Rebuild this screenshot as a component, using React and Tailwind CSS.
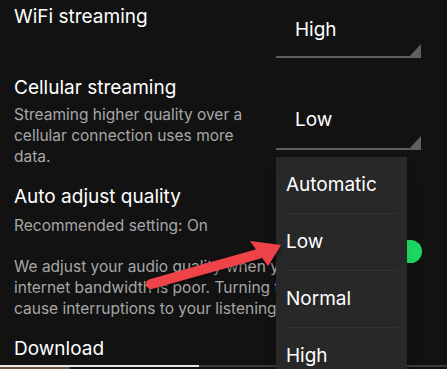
import React from "react";

function Select({ value, className }) {
  return (
    <div className={`relative w-[145px] ${className}`}>
      <div className="pl-[19px] text-[19px] leading-[24px] text-white">{value}</div>
      <div className="absolute right-0 bottom-0 h-[2px] w-full bg-[#5f5f5f]" />
      <svg className="absolute right-0 bottom-0" width="13" height="14" viewBox="0 0 13 14">
        <path d="M13 0 L13 14 L0 14 Z" fill="#5f5f5f" />
      </svg>
    </div>
  );
}

export default function App() {
  const options = ["Automatic", "Low", "Normal", "High"];

  return (
    <div
      className="relative w-[447px] h-[369px] overflow-hidden bg-[#121212] text-white"
      style={{ fontFamily: "Inter, 'Liberation Sans', sans-serif" }}
    >
      {/* wifi row */}
      <div className="flex h-[66px]">
        <div className="pl-[14px] pt-[5px] text-[19px] leading-[24px]">WiFi streaming</div>
        <Select value="High" className="ml-auto mr-[26px] mt-[18px] h-[40px]" />
      </div>

      {/* cellular row */}
      <div className="flex h-[112px]">
        <div className="pl-[14px] pt-[10px] w-[262px]">
          <div className="text-[19px] leading-[24px]">Cellular streaming</div>
          <div className="mt-[4px] text-[15.5px] leading-[21px] text-[#a7a7a7]">
            <div>Streaming higher quality over a</div>
            <div>cellular connection uses more</div>
            <div>data.</div>
          </div>
        </div>
        <Select value="Low" className="ml-auto mr-[26px] mt-[42px] h-[42px]" />
      </div>

      {/* auto adjust row */}
      <div className="flex">
        <div className="pl-[14px] pt-[7px] w-[276px] shrink-0 overflow-hidden">
          <div className="text-[19px] leading-[24px]">Auto adjust quality</div>
          <div className="mt-[6px] text-[15.5px] leading-[21px] text-[#a7a7a7]">
            Recommended setting: On
          </div>
          <div className="mt-[20px] text-[15.5px] leading-[21px] text-[#a7a7a7] whitespace-nowrap">
            <div>We adjust your audio quality when your</div>
            <div>internet bandwidth is poor. Turning this off may</div>
            <div>cause interruptions to your listening.</div>
          </div>
          <div className="mt-[18px] text-[19px] leading-[24px]">Download</div>
        </div>
        <div className="ml-auto mr-[25px] mt-[62px] h-[23px] w-[40px] rounded-full bg-[#1ed760]" />
      </div>

      {/* bottom progress */}
      <div className="absolute left-0 right-0 top-[365px] flex h-[2px]">
        <div className="w-[199px] bg-[#e8e8e8]" />
        <div className="flex-1 bg-[#3a3a3a]" />
      </div>
      <div className="absolute left-0 top-[367px] h-[2px] w-[70px] bg-[#6b5138]" />

      {/* open dropdown menu */}
      <div className="absolute left-[276px] top-[157px] w-[131px] h-[230px] bg-[#282828] shadow-lg">
        {options.map((o, i) => (
          <div key={o} className="mx-[9px]">
            <div className="h-[56px] flex items-center pl-[1px] text-[19px]">{o}</div>
            {i < options.length - 1 && <div className="h-px bg-[#333333]" />}
          </div>
        ))}
      </div>

      {/* red arrow */}
      <svg className="absolute left-0 top-0" width="447" height="369" viewBox="0 0 447 369">
        <defs>
          <filter id="sh" x="-20%" y="-20%" width="140%" height="140%">
            <feDropShadow dx="1" dy="2" stdDeviation="2" floodColor="#000" floodOpacity="0.5" />
          </filter>
        </defs>
        <g filter="url(#sh)">
          <line x1="151" y1="284" x2="258" y2="254" stroke="#f0434a" strokeWidth="10" strokeLinecap="round" />
          <path d="M250 241 L281 245 L268 266 Z" fill="#f0434a" />
        </g>
      </svg>
    </div>
  );
}
